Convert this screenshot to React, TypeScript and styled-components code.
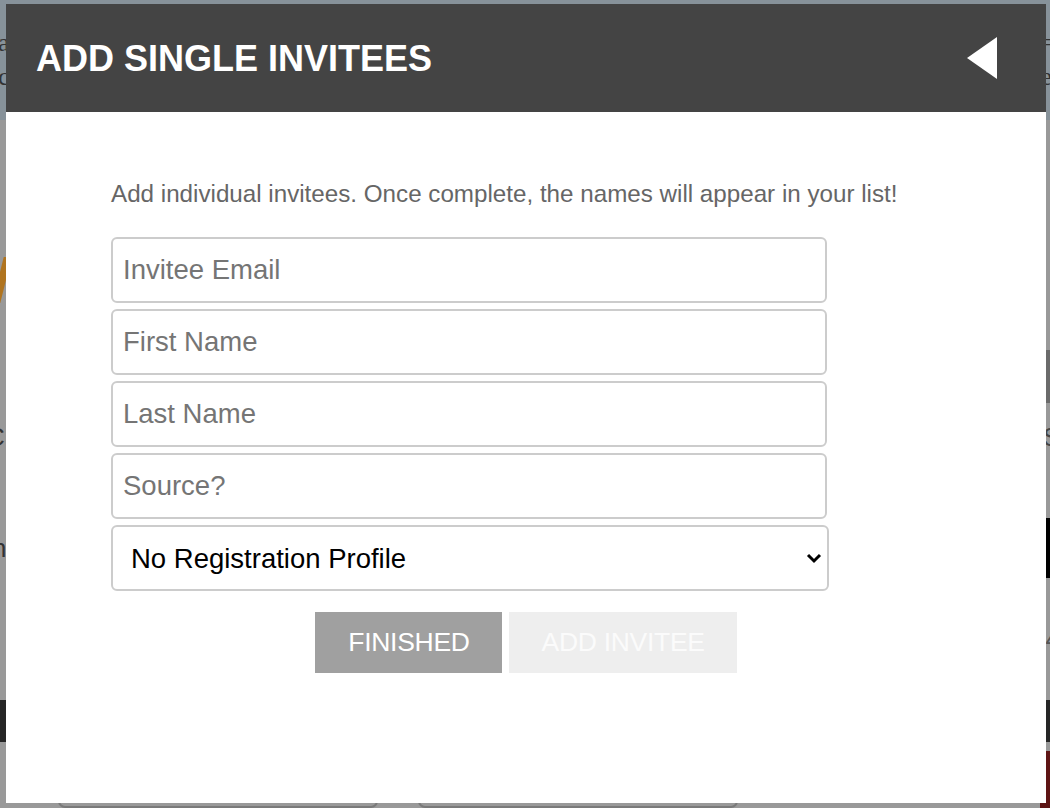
import React from 'react';
import styled, { createGlobalStyle } from 'styled-components';

const GlobalStyle = createGlobalStyle`
  html, body {
    margin: 0;
    padding: 0;
    height: 100%;
    overflow: hidden;
    background: #999999;
    font-family: "Liberation Sans", Arial, Helvetica, sans-serif;
  }
`;

/* dimmed page behind the modal */
const Page = styled.div`
  display: flex;
  flex-direction: column;
  height: 808px;
  overflow: hidden;
  color: #2b2b2b;
`;

const TopBand = styled.div`
  height: 120px;
  background: #87929a;
  display: flex;
  flex-direction: column;
  justify-content: center;
  gap: 8px;
  font-family: "Liberation Serif", serif;
  font-size: 26px;
`;

const Row = styled.div<{ $height: number; $bg?: string }>`
  height: ${p => p.$height}px;
  flex-shrink: 0;
  display: flex;
  justify-content: space-between;
  align-items: center;
  background: ${p => p.$bg || 'transparent'};
`;

const Edge = styled.span<{ $side: 'left' | 'right'; $color?: string; $size?: number }>`
  color: ${p => p.$color || '#333'};
  font-size: ${p => p.$size || 26}px;
  line-height: 1;
  margin-${p => p.$side}: -2px;
`;

const EdgeBlock = styled.span<{ $color: string }>`
  align-self: stretch;
  width: 10px;
  background: ${p => p.$color};
`;

const Stroke = styled.span`
  width: 8px;
  height: 46px;
  margin-left: -2px;
  background: #b0741f;
  transform: skewX(-14deg);
`;

const CardRow = styled.div`
  display: flex;
  gap: 40px;
  padding-left: 58px;
  align-self: flex-end;
`;

const GhostCard = styled.div`
  width: 316px;
  height: 10px;
  border: 2px solid #7a7a7a;
  border-radius: 10px;
`;

/* modal */
const Modal = styled.div`
  position: fixed;
  top: 4px;
  left: 6px;
  width: 1040px;
  height: 799px;
  background: #ffffff;
  display: flex;
  flex-direction: column;
`;

const Header = styled.div`
  height: 108px;
  background: #444444;
  display: flex;
  align-items: center;
  justify-content: space-between;
  padding: 0 49px 0 30px;
  flex-shrink: 0;
`;

const Title = styled.h1`
  margin: 0;
  color: #ffffff;
  font-size: 36px;
  font-weight: 700;
  padding-top: 2px;
`;

const BackButton = styled.button`
  border: 0;
  background: none;
  padding: 0;
  display: flex;
  cursor: pointer;
`;

const Body = styled.div`
  padding-top: 68px;
  display: flex;
  flex-direction: column;
`;

const Form = styled.form`
  padding-left: 105px;
  display: flex;
  flex-direction: column;
`;

const Intro = styled.p`
  margin: 0 0 29px;
  color: #666666;
  font-size: 24.2px;
  line-height: 28px;
`;

const Fields = styled.div`
  width: 718px;
  display: flex;
  flex-direction: column;
  gap: 6px;
`;

const Field = styled.input`
  box-sizing: border-box;
  width: 716px;
  height: 66px;
  border: 2px solid #cccccc;
  border-radius: 6px;
  padding: 0 10px;
  font-family: "Liberation Sans", Helvetica, sans-serif;
  font-size: 27.5px;
  color: #222;
  outline: none;

  &::placeholder {
    color: #757575;
  }
`;

const SelectWrap = styled.div`
  position: relative;
  width: 718px;
  height: 66px;
`;

const Select = styled.select`
  box-sizing: border-box;
  width: 100%;
  height: 100%;
  appearance: none;
  border: 2px solid #cccccc;
  border-radius: 6px;
  background: #ffffff;
  padding: 0 18px;
  font-family: "Liberation Sans", Helvetica, sans-serif;
  font-size: 27.5px;
  color: #000000;
  outline: none;
`;

const Chevron = styled.svg`
  position: absolute;
  right: 7px;
  top: 27px;
  pointer-events: none;
`;

const Actions = styled.div`
  display: flex;
  justify-content: center;
  gap: 7px;
  margin-top: 21px;
`;

const ActionButton = styled.button<{ $muted?: boolean }>`
  height: 61px;
  padding: 0 32px 0 33px;
  border: 0;
  background: ${p => (p.$muted ? '#eeeeee' : '#a0a0a0')};
  color: ${p => (p.$muted ? '#fbfbfb' : '#ffffff')};
  font-family: "Liberation Sans", Helvetica, sans-serif;
  font-size: 26.5px;
  letter-spacing: -0.3px;
  cursor: ${p => (p.$muted ? 'default' : 'pointer')};
`;

export default function App() {
  return (
    <>
      <GlobalStyle />
      <Page>
        <TopBand>
          <Row $height={26}>
            <Edge $side="left">a</Edge>
            <Edge $side="right">=</Edge>
          </Row>
          <Row $height={26}>
            <Edge $side="left">c</Edge>
            <Edge $side="right">e</Edge>
          </Row>
        </TopBand>
        <Row $height={130} />
        <Row $height={60}>
          <Stroke />
        </Row>
        <Row $height={40} />
        <Row $height={53}>
          <span />
          <EdgeBlock $color="#6b6b6b" />
        </Row>
        <Row $height={67}>
          <Edge $side="left" style={{ marginLeft: -14 }}>C</Edge>
          <Edge $side="right" $color="#444" style={{ marginRight: -10 }}>S</Edge>
        </Row>
        <Row $height={48} />
        <Row $height={60}>
          <Edge $side="left" style={{ marginLeft: -8 }}>nc</Edge>
          <EdgeBlock $color="#000000" />
        </Row>
        <Row $height={122}>
          <span />
          <Edge $side="right" $color="#555" style={{ marginRight: -10 }}>4</Edge>
        </Row>
        <Row $height={42} $bg="#262626" />
        <Row $height={9} />
        <Row $height={57}>
          <CardRow>
            <GhostCard />
            <GhostCard />
          </CardRow>
          <EdgeBlock $color="#5e1515" />
        </Row>
      </Page>

      <Modal>
        <Header>
          <Title>ADD SINGLE INVITEES</Title>
          <BackButton aria-label="Back">
            <svg width="30" height="42" viewBox="0 0 30 42">
              <polygon points="30,0 30,42 0,21" fill="#ffffff" />
            </svg>
          </BackButton>
        </Header>
        <Body>
          <Form onSubmit={e => e.preventDefault()}>
            <Intro>
              Add individual invitees. Once complete, the names will appear in
              your list!
            </Intro>
            <Fields>
              <Field type="email" placeholder="Invitee Email" />
              <Field placeholder="First Name" />
              <Field placeholder="Last Name" />
              <Field placeholder="Source?" />
              <SelectWrap>
                <Select defaultValue="none">
                  <option value="none">No Registration Profile</option>
                </Select>
                <Chevron width="16" height="12" viewBox="0 0 16 12">
                  <path
                    d="M2 3 L8 9 L14 3"
                    fill="none"
                    stroke="#000"
                    strokeWidth="3"
                  />
                </Chevron>
              </SelectWrap>
            </Fields>
          </Form>
          <Actions>
            <ActionButton type="button">FINISHED</ActionButton>
            <ActionButton type="button" $muted disabled>
              ADD INVITEE
            </ActionButton>
          </Actions>
        </Body>
      </Modal>
    </>
  );
}
